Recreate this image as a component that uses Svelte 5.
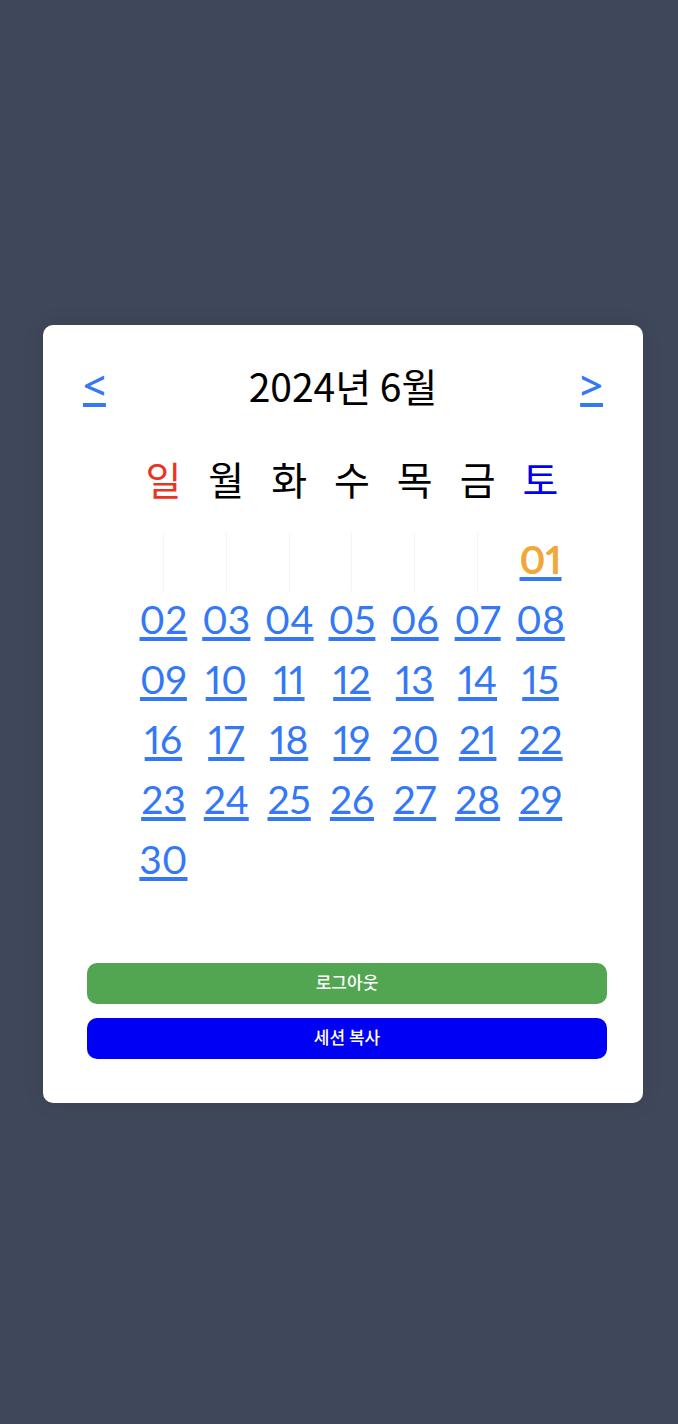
<script>
  const weekdays = ['일', '월', '화', '수', '목', '금', '토'];
  const days = Array.from({ length: 30 }, (_, i) => i + 1);
  const cells = [...Array(6).fill(null), ...days];
  const weeks = [];
  for (let i = 0; i < cells.length; i += 7) weeks.push(cells.slice(i, i + 7));
  const pad = (n) => String(n).padStart(2, '0');
  const today = 1;
</script>

<main>
  <section class="card">
    <header>
      <a href="#prev" aria-label="이전 달">&lt;</a>
      <h1>2024년 6월</h1>
      <a href="#next" aria-label="다음 달">&gt;</a>
    </header>
    <table>
      <thead>
        <tr>
          {#each weekdays as name, i}
            <th scope="col" class:sun={i === 0} class:sat={i === 6}>{name}</th>
          {/each}
        </tr>
      </thead>
      <tbody>
        {#each weeks as week}
          <tr>
            {#each week as day}
              <td class:empty={day === null}>
                {#if day}<a href="#day-{day}"><span class:today={day === today}>{pad(day)}</span></a>{/if}
              </td>
            {/each}
          </tr>
        {/each}
      </tbody>
    </table>
    <div class="actions">
      <button type="button" class="logout">로그아웃</button>
      <button type="button" class="copy">세션 복사</button>
    </div>
  </section>
</main>

<style>
  :global(body) {
    background: #3f475a;
  }
  main {
    box-sizing: border-box;
    min-height: 100vh;
    padding: 4px 35px 0 43px;
    display: flex;
    align-items: center;
    justify-content: center;
    font-family: "Noto Sans CJK KR", sans-serif;
    font-size: 39px;
    color: #000;
  }
  .card {
    box-sizing: border-box;
    width: 100%;
    max-width: 600px;
    padding: 30px 40px 44px;
    border-radius: 10px;
    background: #fff;
    box-shadow: 0 0 20px rgba(0, 0, 0, 0.1);
  }
  header {
    display: flex;
    align-items: center;
    justify-content: space-between;
    height: 60px;
  }
  h1 {
    margin: 0;
    font-size: 39px;
    font-weight: 400;
    line-height: 60px;
  }
  a {
    color: #3478f6;
    text-decoration: underline;
    text-decoration-thickness: 4px;
    text-underline-offset: 3px;
    text-decoration-skip-ink: none;
  }
  header a {
    font-family: "Open Sans", sans-serif;
    font-size: 40px;
    font-weight: 600;
    line-height: 60px;
  }
  table {
    width: 440px;
    max-width: 100%;
    margin: 34px 31px 0 auto;
    table-layout: fixed;
    border-collapse: collapse;
  }
  th {
    height: 58px;
    padding: 0 0 26px;
    font-weight: 400;
    line-height: 58px;
  }
  td {
    height: 60px;
    padding: 0;
    font-family: Lato, sans-serif;
    font-variant-numeric: proportional-nums;
    line-height: 52px;
    text-align: center;
    vertical-align: top;
  }
  .sun {
    color: #eb3324;
  }
  .sat {
    color: #0000f5;
  }
  .empty {
    background: linear-gradient(#f4f4f4, #f4f4f4) center / 1px 100% no-repeat;
  }
  .today {
    color: #f2a73b;
    font-weight: 700;
  }
  .actions {
    display: flex;
    flex-direction: column;
    gap: 14px;
    margin: 70px -4px 0 4px;
  }
  button {
    height: 41px;
    padding: 0 0 4px;
    border: 0;
    border-radius: 10px;
    color: #fff;
    font: 500 17px "Noto Sans CJK KR", sans-serif;
  }
  .logout {
    background: #52a551;
  }
  .copy {
    background: #0000f5;
  }
</style>
